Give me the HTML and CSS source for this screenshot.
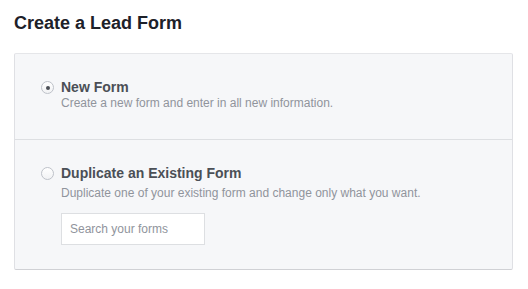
FILE: index.html
```html
<!DOCTYPE html>
<html>
<head>
<meta charset="utf-8">
<link rel="stylesheet" href="styles.css">
</head>
<body>
<h1 class="title">Create a Lead Form</h1>
<div class="panel">
  <div class="option">
    <span class="radio checked"></span>
    <div class="option-body">
      <div class="label">New Form</div>
      <div class="desc">Create a new form and enter in all new information.</div>
    </div>
  </div>
  <div class="option option-dup">
    <span class="radio"></span>
    <div class="option-body">
      <div class="label">Duplicate an Existing Form</div>
      <div class="desc desc-dup">Duplicate one of your existing form and change only what you want.</div>
      <input class="search" type="text" placeholder="Search your forms">
    </div>
  </div>
</div>
</body>
</html>
```
FILE: styles.css
```css
html, body {
  margin: 0;
  background: #ffffff;
}
body {
  padding: 12px 15px 0 14px;
  font-family: "Liberation Sans", Arial, Helvetica, sans-serif;
}
.title {
  margin: 0 0 19px 0;
  font-size: 18px;
  line-height: 22px;
  font-weight: bold;
  color: #1d2129;
}
.panel {
  background: #f6f7f9;
  border: 1px solid;
  border-color: #e5e6e9 #dfe0e4 #d0d1d5;
  border-radius: 2px;
}
.option {
  display: flex;
  align-items: flex-start;
  padding: 25px 20px 28px 26px;
}
.option-dup {
  border-top: 1px solid #dddfe2;
  padding-bottom: 24px;
}
.radio {
  flex: none;
  box-sizing: border-box;
  width: 13px;
  height: 13px;
  margin-top: 2px;
  margin-right: 7px;
  border: 1px solid #bec2c9;
  border-radius: 50%;
  background: linear-gradient(#ffffff, #f1f2f4);
  display: flex;
  align-items: center;
  justify-content: center;
}
.radio.checked::after {
  content: "";
  width: 4px;
  height: 4px;
  border-radius: 50%;
  background: #4b4f56;
}
.option-body {
  display: flex;
  flex-direction: column;
  align-items: flex-start;
}
.label {
  font-size: 14px;
  line-height: 16px;
  font-weight: bold;
  color: #4b4f56;
}
.desc {
  font-size: 12px;
  line-height: 16px;
  color: #90949c;
}
.desc-dup {
  margin-top: 4px;
}
.search {
  margin: 12px 0 0 0;
  box-sizing: border-box;
  width: 144px;
  height: 32px;
  padding: 0 8px;
  border: 1px solid #dddfe2;
  border-radius: 0;
  background: #ffffff;
  font-family: "Liberation Sans", Arial, Helvetica, sans-serif;
  font-size: 12px;
  color: #1d2129;
  outline: none;
}
.search::placeholder {
  color: #90949c;
  opacity: 1;
}
```
